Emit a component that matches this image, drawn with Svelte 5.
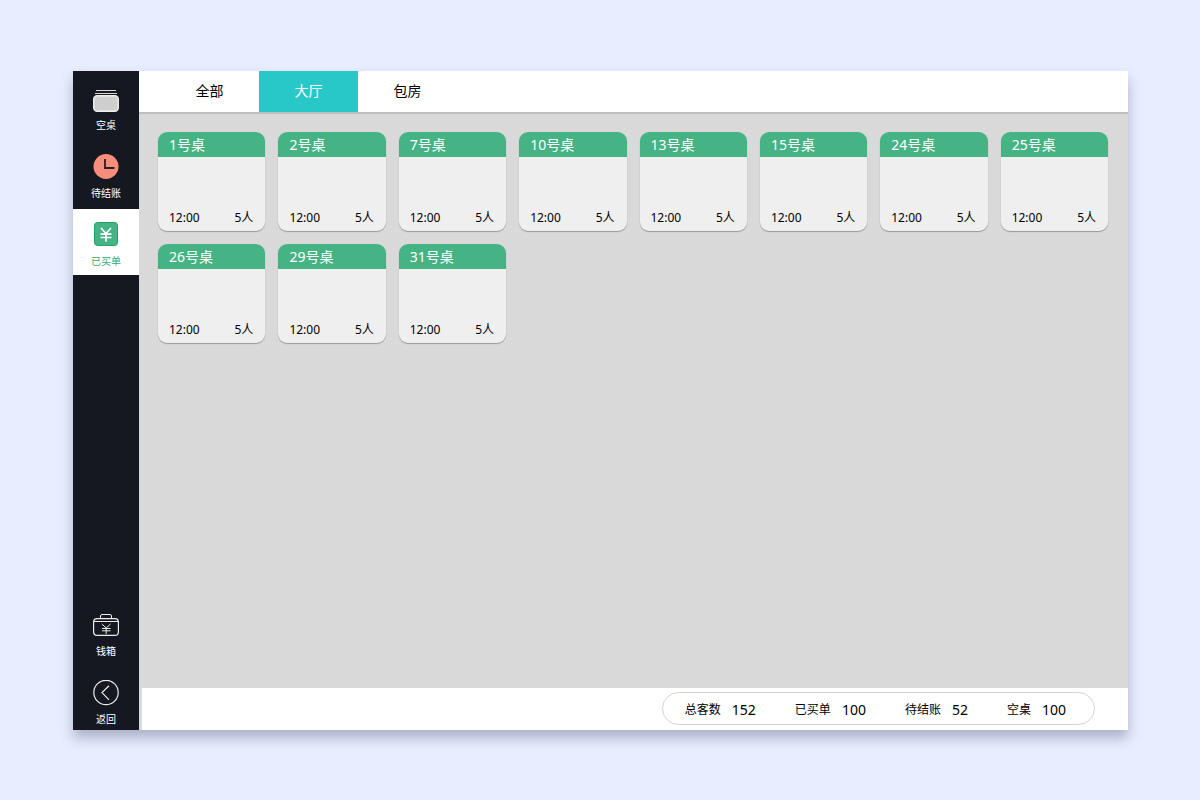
<script lang="ts">
  type Table = { no: number; time: string; guests: number };

  const areas = ["全部", "大厅", "包房"];
  const tables: Table[] = [1, 2, 7, 10, 13, 15, 24, 25, 26, 29, 31].map((no) => ({
    no,
    time: "12:00",
    guests: 5
  }));
  const totals = [
    { label: "总客数", value: 152 },
    { label: "已买单", value: 100 },
    { label: "待结账", value: 52 },
    { label: "空桌", value: 100 }
  ];

  let area = $state("大厅");
  let status = $state("paid");
</script>

<div class="page">
  <div class="window">
    <nav class="sidebar">
      <div class="group">
        <button class:active={status === "empty"} onclick={() => (status = "empty")}>
          <svg viewBox="0 0 26 26" aria-hidden="true">
            <path d="M3 4.5h20M2 7.5h22" stroke="#d8d8d6" fill="none" />
            <rect x="0.7" y="9.7" width="24.6" height="15.6" rx="3.5" fill="#cfcfcf" stroke="#efefec" stroke-width="1.4" />
          </svg>
          <span>空桌</span>
        </button>
        <button class:active={status === "pending"} onclick={() => (status = "pending")}>
          <svg viewBox="0 0 26 26" aria-hidden="true">
            <circle cx="13" cy="12.5" r="12.5" fill="#f98d7c" />
            <path d="M12 5v9h9.5" fill="none" stroke="#2b1c22" stroke-width="1.8" />
          </svg>
          <span>待结账</span>
        </button>
        <button class:active={status === "paid"} onclick={() => (status = "paid")}>
          <svg viewBox="0 0 26 26" aria-hidden="true">
            <rect x="1.5" y="0.5" width="23" height="23" rx="3" fill="#45b384" stroke="#1fa268" />
            <path
              d="M8 6l5 5.5L18 6M13 11.5v8M7.5 12.2h11M7.5 15.5h11"
              fill="none"
              stroke="#fff"
              stroke-width="1.7"
            />
          </svg>
          <span>已买单</span>
        </button>
      </div>
      <div class="group bottom">
        <button>
          <svg viewBox="0 0 26 26" fill="none" stroke="#ecece9" aria-hidden="true">
            <rect x="0.6" y="6.6" width="24.8" height="16.8" rx="3.5" stroke-width="1.2" />
            <path d="M7.5 6V4A1.5 1.5 0 0 1 9 2.5h8A1.5 1.5 0 0 1 18.5 4v2M1 9.5h24" />
            <path d="M8.8 12l4.4 4 4.4-4M13.2 15.5v6.5M9 16.5h8.5M9 18.8h8.5" />
          </svg>
          <span>钱箱</span>
        </button>
        <button>
          <svg viewBox="0 0 26 26" fill="none" stroke="#ecece9" aria-hidden="true">
            <circle cx="13" cy="12.5" r="12.2" stroke-width="1.2" />
            <path d="M16 5.8L9 12.6l7 7.2" stroke-width="1.2" />
          </svg>
          <span>返回</span>
        </button>
      </div>
    </nav>

    <main>
      <div class="tabs" role="tablist">
        {#each areas as name}
          <button
            role="tab"
            aria-selected={area === name}
            class:selected={area === name}
            onclick={() => (area = name)}
          >
            {name}
          </button>
        {/each}
      </div>

      <div class="tables">
        {#each tables as table (table.no)}
          <button class="card">
            <span class="card-head">{table.no}号桌</span>
            <span class="card-foot">
              <span>{table.time}</span>
              <span>{table.guests}人</span>
            </span>
          </button>
        {/each}
      </div>

      <footer>
        <dl>
          {#each totals as total}
            <div>
              <dt>{total.label}</dt>
              <dd>{total.value}</dd>
            </div>
          {/each}
        </dl>
      </footer>
    </main>
  </div>
</div>

<style>
  :global(body) {
    background: #e8eeff;
  }

  .page {
    box-sizing: border-box;
    display: flex;
    min-height: 100vh;
    padding: 71px 72px 70px 73px;
    font-family: "Noto Sans", "Noto Sans CJK SC", sans-serif;
    color: #000;
  }

  .window {
    display: flex;
    flex: 1;
    background: #d9d9d9;
    box-shadow: 0 8px 12px rgba(60, 60, 90, 0.34);
  }

  button {
    margin: 0;
    padding: 0;
    border: 0;
    background: none;
    color: inherit;
    font: inherit;
    cursor: pointer;
  }

  .sidebar {
    box-sizing: border-box;
    display: flex;
    flex-direction: column;
    justify-content: space-between;
    width: 66px;
    padding-top: 2px;
    background: #151821;
    color: #fff;
  }

  .group {
    display: flex;
    flex-direction: column;
    gap: 2px;
  }

  .group button {
    display: flex;
    flex-direction: column;
    align-items: center;
    gap: 5px;
    padding: 13px 0 6px;
    font-size: 10px;
    line-height: 16px;
  }

  .group button.active {
    background: #fff;
    color: #35ad78;
  }

  .group.bottom {
    gap: 5px;
  }

  .group.bottom button {
    padding-bottom: 3px;
  }

  .group svg {
    width: 26px;
    height: 26px;
  }

  main {
    display: flex;
    flex: 1;
    flex-direction: column;
    min-width: 0;
  }

  .tabs {
    display: flex;
    padding-left: 21px;
    border-bottom: 2px solid #bebebe;
    background: #fff;
  }

  .tabs button {
    width: 99px;
    padding-bottom: 3px;
    height: 41px;
    font-size: 14px;
  }

  .tabs .selected {
    background: #28c8c8;
    color: #fff;
  }

  .tables {
    display: grid;
    flex: 1;
    grid-template-columns: repeat(8, 1fr);
    align-content: start;
    gap: 13px;
    padding: 18px 20px 18px 19px;
  }

  .card {
    display: flex;
    flex-direction: column;
    justify-content: space-between;
    height: 99px;
    overflow: hidden;
    border-radius: 9px;
    background: #efefef;
    box-shadow: 0 1px 1px #999;
    text-align: left;
  }

  .card-head {
    padding: 0 11px;
    background: #45b384;
    color: #fff;
    font-size: 14px;
    line-height: 25px;
  }

  .card-foot {
    display: flex;
    justify-content: space-between;
    padding: 0 12px 4px 11px;
    font-size: 12px;
    line-height: 18px;
  }

  footer {
    display: flex;
    justify-content: flex-end;
    margin-left: 3px;
    padding: 4px 33px 5px 0;
    background: #fff;
  }

  dl {
    display: flex;
    gap: 39px;
    margin: 0;
    padding: 2px 28px 0 22px;
    border: 1px solid #d4d4d4;
    border-radius: 17px;
    line-height: 29px;
  }

  dl div {
    display: flex;
    align-items: center;
    gap: 11px;
  }

  dt {
    font-size: 12px;
  }

  dd {
    margin: 0;
    font-size: 14px;
  }
</style>
